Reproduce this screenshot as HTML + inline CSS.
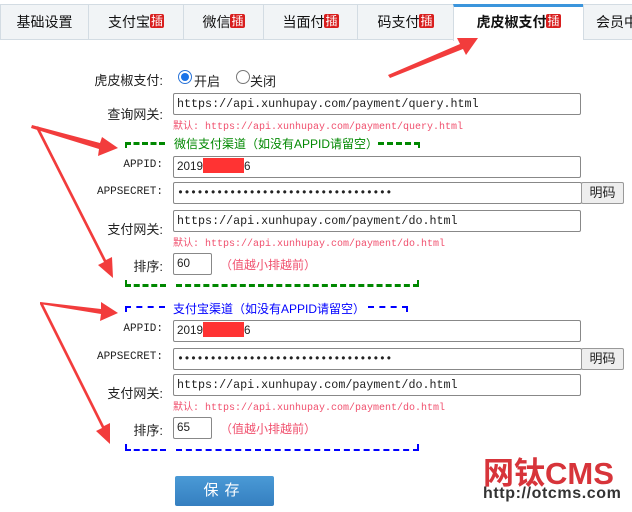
<!DOCTYPE html>
<html><head><meta charset="utf-8"><style>
body{margin:0;width:632px;height:512px;background:#fff;position:relative;overflow:hidden;font-family:"Liberation Sans","Noto Sans CJK SC",sans-serif;font-size:13px;color:#222}
.a{position:absolute}
.tab{position:absolute;top:4px;height:36px;background:#f1f4f6;border:1px solid #d3dce3;border-right:none;box-sizing:border-box;line-height:34px;text-align:center;font-size:14px;color:#111}
.tab.on{background:#fff;border-top:3px solid #3b95dc;border-bottom:none;font-weight:bold;line-height:31px;height:37px}
.b{display:inline-block;background:#d81e1e;color:#fff;font-size:12px;line-height:14px;padding:0 1px;border-radius:2px;vertical-align:2px;font-weight:normal}
.lab{position:absolute;right:469px;text-align:right;font-size:13px}
.mono{font-family:"Liberation Mono","Noto Sans CJK SC",monospace}
.in{position:absolute;left:173px;width:408px;height:22px;border:1px solid #888;box-sizing:border-box;font-family:"Liberation Mono",monospace;font-size:11.7px;line-height:20px;padding-left:3px;border-radius:2px}
.pw{letter-spacing:-0.5px}
.def{position:absolute;left:173px;color:#f0506e;font-family:"Liberation Mono","Noto Sans CJK SC",monospace;font-size:10px}
.btn{position:absolute;left:581px;width:43px;height:22px;border:1px solid #999;background:#eee;box-sizing:border-box;text-align:center;line-height:20px;font-size:13px;border-radius:2px}
.dg{border-top:3px dashed #080}
.db{border-top:2px dashed #00f}
</style></head><body>
<div class="tab" style="left:0;width:88px">基础设置</div>
<div class="tab" style="left:88px;width:95px">支付宝<span class="b">插</span></div>
<div class="tab" style="left:183px;width:80px">微信<span class="b">插</span></div>
<div class="tab" style="left:263px;width:94px">当面付<span class="b">插</span></div>
<div class="tab" style="left:357px;width:96px">码支付<span class="b">插</span></div>
<div class="tab on" style="left:453px;width:130px">虎皮椒支付<span class="b">插</span></div>
<div class="tab" style="left:583px;width:60px;text-align:left;padding-left:12px">会员中</div>

<div class="lab" style="top:70px">虎皮椒支付:</div>
<div class="a" style="left:178px;top:70px;width:12px;height:12px;border-radius:50%;border:1px solid #2a74d8;background:#fff"><div style="margin:2px;width:8px;height:8px;border-radius:50%;background:#1a73e8"></div></div>
<div class="a" style="left:194px;top:71px">开启</div>
<div class="a" style="left:236px;top:70px;width:12px;height:12px;border-radius:50%;border:1px solid #777"></div>
<div class="a" style="left:250px;top:71px">关闭</div>

<div class="lab" style="top:104px">查询网关:</div>
<div class="in" style="top:93px">https://api.xunhupay.com/payment/query.html</div>
<div class="def" style="top:117px">默认: https://api.xunhupay.com/payment/query.html</div>

<div class="a dg" style="left:125px;top:142px;width:40px"></div>
<div class="a" style="left:125px;top:142px;height:6px;border-left:2px solid #080"></div>
<div class="a" style="left:174px;top:135px;color:#080;font-size:12px">微信支付渠道（如没有APPID请留空）</div>
<div class="a dg" style="left:378px;top:142px;width:42px"></div>
<div class="a" style="left:418px;top:142px;height:6px;border-left:2px solid #080"></div>

<div class="lab mono" style="top:159px;font-size:11px">APPID:</div>
<div class="in" style="top:156px;font-family:'Liberation Sans'">2019<span style="display:inline-block;width:41px;height:15px;background:#f33;vertical-align:-3px"></span>6</div>
<div class="lab mono" style="top:186px;font-size:11px">APPSECRET:</div>
<div class="in pw" style="top:182px;width:409px">•••••••••••••••••••••••••••••••••</div>
<div class="btn" style="top:182px">明码</div>
<div class="lab" style="top:219px">支付网关:</div>
<div class="in" style="top:210px">https://api.xunhupay.com/payment/do.html</div>
<div class="def" style="top:234px">默认: https://api.xunhupay.com/payment/do.html</div>
<div class="lab" style="top:256px">排序:</div>
<div class="in" style="top:253px;width:39px;font-family:'Liberation Sans'">60</div>
<div class="a" style="left:220px;top:256px;color:#f0506e;font-size:12px">（值越小排越前）</div>
<div class="a dg" style="left:125px;top:284px;width:41px"></div>
<div class="a dg" style="left:176px;top:284px;width:243px"></div>
<div class="a" style="left:125px;top:280px;height:6px;border-left:2px solid #080"></div>
<div class="a" style="left:417px;top:280px;height:6px;border-left:2px solid #080"></div>

<div class="a db" style="left:125px;top:306px;width:40px"></div>
<div class="a" style="left:125px;top:306px;height:6px;border-left:2px solid #00f"></div>
<div class="a" style="left:173px;top:300px;color:#00f;font-size:12px">支付宝渠道（如没有APPID请留空）</div>
<div class="a db" style="left:368px;top:306px;width:40px"></div>
<div class="a" style="left:406px;top:306px;height:6px;border-left:2px solid #00f"></div>

<div class="lab mono" style="top:323px;font-size:11px">APPID:</div>
<div class="in" style="top:320px;font-family:'Liberation Sans'">2019<span style="display:inline-block;width:41px;height:15px;background:#f33;vertical-align:-3px"></span>6</div>
<div class="lab mono" style="top:351px;font-size:11px">APPSECRET:</div>
<div class="in pw" style="top:348px;width:409px">•••••••••••••••••••••••••••••••••</div>
<div class="btn" style="top:348px">明码</div>
<div class="lab" style="top:383px">支付网关:</div>
<div class="in" style="top:374px">https://api.xunhupay.com/payment/do.html</div>
<div class="def" style="top:398px">默认: https://api.xunhupay.com/payment/do.html</div>
<div class="lab" style="top:420px">排序:</div>
<div class="in" style="top:417px;width:39px;font-family:'Liberation Sans'">65</div>
<div class="a" style="left:220px;top:420px;color:#f0506e;font-size:12px">（值越小排越前）</div>
<div class="a db" style="left:125px;top:449px;width:41px"></div>
<div class="a db" style="left:176px;top:449px;width:243px"></div>
<div class="a" style="left:125px;top:444px;height:6px;border-left:2px solid #00f"></div>
<div class="a" style="left:417px;top:444px;height:6px;border-left:2px solid #00f"></div>

<div class="a" style="left:175px;top:476px;width:99px;height:30px;background:linear-gradient(#4a9ad6,#357fc0);border-radius:2px;color:#fff;text-align:center;line-height:30px;font-size:15px;letter-spacing:6px">保存</div>

<div class="a" style="left:483px;top:448px;color:#d7343a;font-size:31px;font-weight:bold;letter-spacing:0px">网钛CMS</div>
<div class="a" style="left:483px;top:485px;color:#333;font-size:16px;font-weight:bold;letter-spacing:0.6px">http://otcms.com</div>

<svg class="a" style="left:0;top:0" width="632" height="512">
<g fill="#f23c3c">
<polygon points="388,75 460,44 457,38 478,38 466,55 463,49 390,78"/>
<polygon points="32,125 100,143 102,137 118,148 98,156 99,149 31,128"/>
<polygon points="36,128 104,262 98,265 113,278 112,257 106,260 38,126"/>
<polygon points="40,302 101,309 101,302 118,313 100,321 101,314 40,304"/>
<polygon points="40,304 102,428 96,431 110,444 110,423 104,426 42,302"/>
</g></svg>
</body></html>
